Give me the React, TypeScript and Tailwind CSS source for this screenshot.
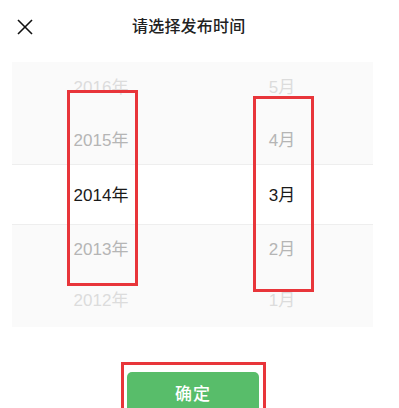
import React from "react";

const font = { fontFamily: '"Liberation Sans", "Noto Sans CJK SC", sans-serif' };

function Row({ y, m, cls, h }: { y: string; m: string; cls: string; h: string }) {
  return (
    <div className={`flex items-center ${h} ${cls} text-[17px]`}>
      <div className="ml-[39px] w-[100px] text-center">{y}</div>
      <div className="ml-[101px] w-[60px] text-center">{m}</div>
    </div>
  );
}

export default function App() {
  return (
    <div className="relative w-[399px] h-[408px] overflow-hidden bg-white" style={font}>
      <div className="flex items-center h-[54px]">
        <svg className="ml-[17px] w-[16px] h-[16px]" viewBox="0 0 16 16">
          <line x1="1" y1="1" x2="15" y2="15" stroke="#111" strokeWidth="1.6" />
          <line x1="15" y1="1" x2="1" y2="15" stroke="#111" strokeWidth="1.6" />
        </svg>
        <div className="ml-[99px] text-[16px] font-medium tracking-[0.2px] text-[#222]">请选择发布时间</div>
      </div>
      <div className="mt-[8px] ml-[12px] w-[361px] h-[265px] bg-[#fafafa] flex flex-col">
        <Row y="2016年" m="5月" cls="text-[#dcdcdc]" h="h-[52px]" />
        <Row y="2015年" m="4月" cls="text-[#b5b5b5] pt-[4px]" h="h-[50px]" />
        <div className="border-y border-[#eeeeee] bg-white">
          <Row y="2014年" m="3月" cls="text-[#1a1a1a] pt-[2px]" h="h-[59px]" />
        </div>
        <Row y="2013年" m="2月" cls="text-[#b5b5b5]" h="h-[50px]" />
        <Row y="2012年" m="1月" cls="text-[#dcdcdc]" h="h-[52px]" />
      </div>
      <div className="mt-[45px] ml-[127px] w-[132px] h-[46px] rounded-[5px] bg-[#58bd6a] flex items-center justify-center text-white text-[17px] font-medium tracking-[1px]">
        确定
      </div>
      <div className="absolute left-[67px] top-[90px] w-[71px] h-[196px] border-[3px] border-[#e8353a]" />
      <div className="absolute left-[253px] top-[96px] w-[61px] h-[196px] border-[3px] border-[#e8353a]" />
      <div className="absolute left-[121px] top-[362px] w-[145px] h-[60px] border-[3px] border-[#e8353a]" />
    </div>
  );
}
